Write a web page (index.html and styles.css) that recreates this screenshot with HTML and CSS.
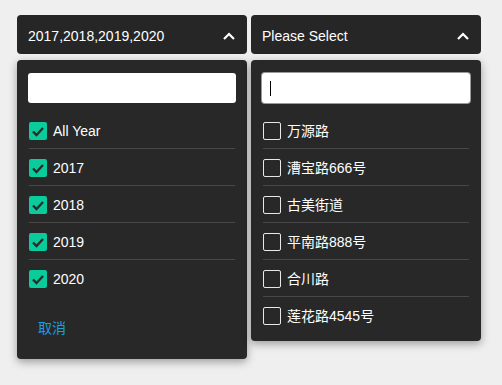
FILE: index.html
```html
<!DOCTYPE html>
<html lang="en">
<head>
  <meta charset="UTF-8" />
  <title>Multi Select</title>
  <link rel="stylesheet" href="styles.css">
</head>
<body>
  <div class="selects">
    <div class="select">
      <div class="select-head">
        <span>2017,2018,2019,2020</span>
        <svg class="chevron" width="12" height="8" viewBox="0 0 12 8"><polyline points="1,7 6,2 11,7" fill="none" stroke="#fff" stroke-width="2.2"/></svg>
      </div>
      <div class="panel">
        <div class="search"></div>
        <ul class="options">
          <li><span class="box checked"><svg width="18" height="18" viewBox="0 0 18 18"><polyline points="4,9.5 7.5,13 14,6" fill="none" stroke="#2a2a2a" stroke-width="2.4"/></svg></span>All Year</li>
          <li><span class="box checked"><svg width="18" height="18" viewBox="0 0 18 18"><polyline points="4,9.5 7.5,13 14,6" fill="none" stroke="#2a2a2a" stroke-width="2.4"/></svg></span>2017</li>
          <li><span class="box checked"><svg width="18" height="18" viewBox="0 0 18 18"><polyline points="4,9.5 7.5,13 14,6" fill="none" stroke="#2a2a2a" stroke-width="2.4"/></svg></span>2018</li>
          <li><span class="box checked"><svg width="18" height="18" viewBox="0 0 18 18"><polyline points="4,9.5 7.5,13 14,6" fill="none" stroke="#2a2a2a" stroke-width="2.4"/></svg></span>2019</li>
          <li><span class="box checked"><svg width="18" height="18" viewBox="0 0 18 18"><polyline points="4,9.5 7.5,13 14,6" fill="none" stroke="#2a2a2a" stroke-width="2.4"/></svg></span>2020</li>
        </ul>
        <div class="panel-foot"><a href="#" class="cancel">取消</a></div>
      </div>
    </div>
    <div class="select">
      <div class="select-head">
        <span>Please Select</span>
        <svg class="chevron" width="12" height="8" viewBox="0 0 12 8"><polyline points="1,7 6,2 11,7" fill="none" stroke="#fff" stroke-width="2.2"/></svg>
      </div>
      <div class="panel">
        <div class="search focused"><span class="caret"></span></div>
        <ul class="options">
          <li><span class="box"></span>万源路</li>
          <li><span class="box"></span>漕宝路666号</li>
          <li><span class="box"></span>古美街道</li>
          <li><span class="box"></span>平南路888号</li>
          <li><span class="box"></span>合川路</li>
          <li><span class="box"></span>莲花路4545号</li>
        </ul>
      </div>
    </div>
  </div>
</body>
</html>
```

FILE: styles.css
```css
body { margin: 0; padding: 15px 17px; background: #efefef; font-family: "Liberation Sans", Arial, "Noto Sans CJK SC", sans-serif; font-size: 14px; color: #fff; }
.selects { display: flex; gap: 4px; align-items: flex-start; }
.select { width: 230px; }
.select-head { box-sizing: border-box; height: 39px; display: flex; align-items: center; justify-content: space-between; padding: 2px 12px 0 11px; background: #262626; border-radius: 4px; }
.chevron { display: block; }
.panel { margin-top: 6px; background: #282828; border-radius: 4px; padding: 13px 11px 8px; box-shadow: 0 3px 8px rgba(0,0,0,0.35); }
.search { height: 30px; background: #fff; border-radius: 3px; display: flex; align-items: center; padding-left: 8px; }
.search.focused { box-shadow: 0 0 0 1px #9a9a9a; }
.caret { width: 1px; height: 15px; background: #000; }
.options { list-style: none; margin: 9px 1px 0; padding: 0; }
.options li { display: flex; align-items: center; gap: 6px; padding: 10px 0 8px; line-height: 18px; border-bottom: 1px solid #484848; }
.options li:last-child { border-bottom: none; }
.box { width: 18px; height: 18px; box-sizing: border-box; border: 1px solid #e8e8e8; border-radius: 2px; flex-shrink: 0; }
.box.checked { border: none; background: #0acb9b; }
.box svg { display: block; }
.panel-foot { padding: 22px 10px 13px; line-height: 20px; }
.cancel { color: #1b9ee0; text-decoration: none; }
```
